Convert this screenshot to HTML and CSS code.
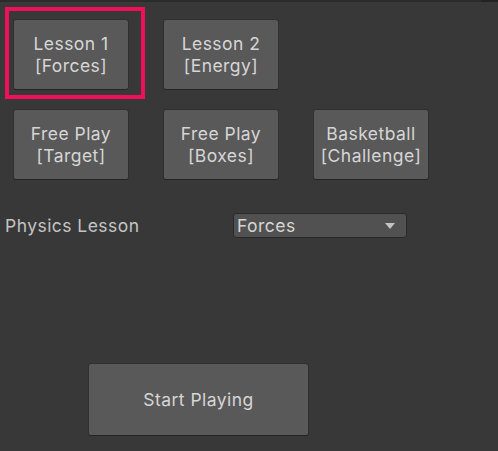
FILE: index.html
```html
<!DOCTYPE html>
<html>
<head>
<meta charset="utf-8">
<link rel="stylesheet" href="styles.css">
</head>
<body>
<div class="topline"><div class="topline-fill"></div></div>
<div class="panel">
  <div class="grid">
    <div class="cell selected">
      <button class="btn">Lesson 1<br>[Forces]</button>
      <div class="highlight"></div>
    </div>
    <div class="cell"><button class="btn">Lesson 2<br>[Energy]</button></div>
    <div class="cell"></div>
    <div class="cell"><button class="btn">Free Play<br>[Target]</button></div>
    <div class="cell"><button class="btn">Free Play<br>[Boxes]</button></div>
    <div class="cell"><button class="btn">Basketball<br>[Challenge]</button></div>
  </div>
  <div class="field-row">
    <span class="field-label">Physics Lesson</span>
    <div class="dropdown">
      <span class="dropdown-value">Forces</span>
      <span class="dropdown-arrow"></span>
    </div>
  </div>
  <div class="start-row">
    <button class="btn start">Start Playing</button>
  </div>
</div>
</body>
</html>
```

FILE: styles.css
```css
html, body {
  margin: 0;
  padding: 0;
  background: #383838;
  width: 498px;
  height: 451px;
  overflow: hidden;
  font-family: Inter, "Noto Sans", sans-serif;
}
.topline {
  height: 2px;
  background: #232323;
  display: flex;
}
.topline-fill {
  width: 481px;
  background: #2b2b2b;
}
.panel {
  display: flex;
  flex-direction: column;
}
.grid {
  display: grid;
  grid-template-columns: repeat(3, 116px);
  grid-auto-rows: 71px;
  column-gap: 34px;
  row-gap: 19px;
  padding: 17px 0 0 13px;
}
.cell {
  position: relative;
}
.btn {
  box-sizing: border-box;
  width: 100%;
  height: 100%;
  margin: 0;
  padding: 0;
  background: #595959;
  border: 1px solid #303030;
  border-bottom-color: #242424;
  border-radius: 3px;
  color: #d6d6d6;
  font-family: Inter, "Noto Sans", sans-serif;
  font-size: 17.5px;
  letter-spacing: 0.45px;
  line-height: 22px;
  text-align: center;
  cursor: pointer;
}
.highlight {
  position: absolute;
  left: -8px;
  top: -12px;
  right: -16px;
  bottom: -9px;
  border: 4px solid #f0105a;
  pointer-events: none;
}
.field-row {
  display: flex;
  align-items: center;
  margin-top: 33px;
  height: 25px;
}
.field-label {
  width: 233px;
  padding-left: 5px;
  box-sizing: border-box;
  color: #c4c4c4;
  font-size: 17.5px;
  letter-spacing: 0.45px;
}
.dropdown {
  box-sizing: border-box;
  width: 174px;
  height: 25px;
  background: #515151;
  border: 1px solid #2a2a2a;
  border-radius: 3px;
  display: flex;
  align-items: center;
  justify-content: space-between;
  padding: 0 11px 0 3px;
}
.dropdown-value {
  color: #d6d6d6;
  font-size: 17.5px;
  letter-spacing: 0.45px;
}
.dropdown-arrow {
  width: 0;
  height: 0;
  border-left: 5px solid transparent;
  border-right: 5px solid transparent;
  border-top: 6px solid #c4c4c4;
}
.start-row {
  display: flex;
  padding-left: 88px;
  margin-top: 125px;
}
.btn.start {
  width: 221px;
  height: 73px;
}
```
